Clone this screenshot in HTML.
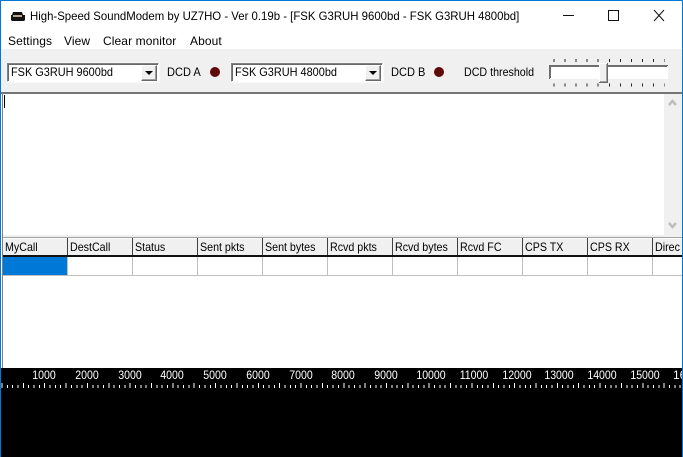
<!DOCTYPE html>
<html><head><meta charset="utf-8"><style>
html,body{margin:0;padding:0;background:#fff}
body{width:683px;height:457px;position:relative;overflow:hidden;font-family:"Liberation Sans",sans-serif;font-size:12px;color:#000}
.a{position:absolute;white-space:nowrap;line-height:13px;transform-origin:0 50%}
.b{position:absolute}
.m{font-size:12px;line-height:15px;top:34px;letter-spacing:.1px}
.combo{position:absolute;top:63px;height:17px;width:150px;background:#fff;border:1px solid;border-color:#808080 #fff #fff #808080;box-shadow:inset 1px 1px 0 #696969,0 0 0 1px #f8f8f8}
.combo span{position:absolute;left:3px;top:2px;line-height:13px;transform:scaleX(.91);transform-origin:0 50%;white-space:nowrap}
.btn{position:absolute;right:1px;top:1px;width:16px;height:16px;box-sizing:border-box;background:#f0f0f0;border:1px solid;border-color:#fff #696969 #696969 #fff;box-shadow:inset -1px -1px 0 #a0a0a0}
.btn i{position:absolute;left:3px;top:5px;width:0;height:0;border:4px solid transparent;border-top:4px solid #000;border-bottom:0}
.led{position:absolute;width:10px;height:10px;border-radius:50%;background:#5f0a0a;top:67px}
.h{position:absolute;top:238px;height:18px;box-sizing:border-box;width:65px;background:#f0f0f0;border-right:1px solid #404040;box-shadow:inset 0 1px 0 #fff}
.h span{position:absolute;left:2px;top:3px;line-height:13px;transform:scaleX(.89);transform-origin:0 50%;white-space:nowrap}
.c{position:absolute;top:257px;height:19px;width:65px;box-sizing:border-box;border-right:1px solid #bfbfbf;border-bottom:1px solid #bfbfbf}
.t{position:absolute;top:368px;color:#fff;font-size:12px;line-height:14px;transform:translateX(-50%) scaleX(.88)}
</style></head><body>
<div class="b" style="left:0;top:0;width:683px;height:1px;background:#0078d7"></div>
<svg class="b" style="left:10px;top:12px" width="16" height="10" viewBox="0 0 16 10"><path d="M3 0H12L13 3H15V8L14 9H2L1 8V3H2Z" fill="#111"/><rect x="3" y="3" width="9" height="2" fill="#b9a98f"/></svg>
<div class="a" id="title" style="left:30px;top:9px;font-size:12px;line-height:15px;transform:scaleX(.949)">High-Speed SoundModem by UZ7HO - Ver 0.19b - [FSK G3RUH 9600bd - FSK G3RUH 4800bd]</div>
<svg class="b" style="left:560px;top:8px" width="112" height="14" viewBox="0 0 112 14" fill="none" stroke="#111" stroke-width="1" shape-rendering="crispEdges"><path d="M3 7.500H14"/><rect x="48.500" y="2.500" width="10" height="10"/><path shape-rendering="auto" d="M94 2L104 13M104 2L94 13"/></svg>
<div class="a m" style="left:8px">Settings</div>
<div class="a m" style="left:64px">View</div>
<div class="a m" style="left:103px">Clear monitor</div>
<div class="a m" style="left:190px">About</div>

<div class="b" style="left:1px;top:49px;width:681px;height:43px;background:#f0f0f0"></div>
<div class="combo" style="left:7px"><span>FSK G3RUH 9600bd</span><div class="btn"><i></i></div></div>
<div class="a" style="left:167px;top:66px;transform:scaleX(.92)">DCD A</div>
<div class="led" style="left:210px"></div>
<div class="combo" style="left:231px"><span>FSK G3RUH 4800bd</span><div class="btn"><i></i></div></div>
<div class="a" style="left:391px;top:66px;transform:scaleX(.92)">DCD B</div>
<div class="led" style="left:434px"></div>
<div class="a" style="left:464px;top:66px;transform:scaleX(.89)">DCD threshold</div>
<svg class="b" style="left:549px;top:57px" width="120" height="32" viewBox="0 0 120 32" shape-rendering="crispEdges">
<rect x="0" y="8" width="119" height="14" fill="#fff"/>
<path d="M0 8.500H119M0 9.500H118M.5 8V22M1.500 8V21" fill="none" stroke="#6e6e6e"/>
<path d="M4.300 3.500H116M4.300 28H116" fill="none" stroke="#222" stroke-width="3" stroke-dasharray="1 10.100"/>
<rect x="50" y="6" width="9" height="20" fill="#f0f0f0"/>
<path d="M50 6.500H58M50.500 6V26" fill="none" stroke="#fff"/><path d="M58.500 6V26M50 25.500H59" fill="none" stroke="#696969"/><path d="M57.500 7V25M51 24.500H58" fill="none" stroke="#a0a0a0"/>
</svg>

<div class="b" style="left:1px;top:92px;width:681px;height:2px;background:#747474"></div>
<div class="b" style="left:4px;top:95px;width:1px;height:13px;background:#000"></div>
<div class="b" style="left:664px;top:94px;width:18px;height:141px;background:#f0f0f0"></div>
<svg class="b" style="left:664px;top:94px" width="18" height="141" fill="none" stroke="#bdbdbd" stroke-width="2.500"><path d="M5 11L8.500 7L12 11M5 129L8.500 133L12 129"/></svg>
<div class="b" style="left:1px;top:235px;width:681px;height:2px;background:#f0f0f0"></div>

<div class="b" style="left:2px;top:237px;width:680px;height:1px;background:#a0a0a0"></div>
<div class="b" style="left:2px;top:92px;width:1px;height:276px;background:#808080"></div>
<div class="h" style="left:3px"><span>MyCall</span></div>
<div class="h" style="left:68px"><span>DestCall</span></div>
<div class="h" style="left:133px"><span>Status</span></div>
<div class="h" style="left:198px"><span>Sent pkts</span></div>
<div class="h" style="left:263px"><span>Sent bytes</span></div>
<div class="h" style="left:328px"><span>Rcvd pkts</span></div>
<div class="h" style="left:393px"><span>Rcvd bytes</span></div>
<div class="h" style="left:458px"><span>Rcvd FC</span></div>
<div class="h" style="left:523px"><span>CPS TX</span></div>
<div class="h" style="left:588px"><span>CPS RX</span></div>
<div class="h" style="left:653px;width:29px;border-right:0;overflow:hidden"><span>Direc</span></div>
<div class="b" style="left:3px;top:255px;width:679px;height:2px;background:#111"></div>
<div class="c" style="left:3px;background:#0078d7"></div>
<div class="c" style="left:68px"></div><div class="c" style="left:133px"></div><div class="c" style="left:198px"></div><div class="c" style="left:263px"></div><div class="c" style="left:328px"></div><div class="c" style="left:393px"></div><div class="c" style="left:458px"></div><div class="c" style="left:523px"></div><div class="c" style="left:588px"></div><div class="c" style="left:653px;width:29px;border-right:0"></div>

<div class="b" style="left:0;top:368px;width:682px;height:89px;background:#000"></div>
<div class="b" style="left:0;top:0;width:1px;height:457px;background:#0078d7"></div>
<div class="b" style="left:682px;top:0;width:1px;height:457px;background:#0078d7"></div>
<div class="t" style="left:44px">1000</div><div class="t" style="left:87px">2000</div><div class="t" style="left:130px">3000</div><div class="t" style="left:172px">4000</div><div class="t" style="left:215px">5000</div><div class="t" style="left:258px">6000</div><div class="t" style="left:301px">7000</div><div class="t" style="left:343px">8000</div><div class="t" style="left:386px">9000</div><div class="t" style="left:431px">10000</div><div class="t" style="left:474px">11000</div><div class="t" style="left:517px">12000</div><div class="t" style="left:559px">13000</div><div class="t" style="left:602px">14000</div><div class="t" style="left:645px">15000</div>
<div class="a" style="left:673px;top:368px;color:#fff;font-size:12px;line-height:14px;width:9px;overflow:hidden">16000</div>
<svg class="b" style="left:0;top:380px" width="682" height="12" shape-rendering="crispEdges"><path d="M1.500 6.500H682" stroke="#fff" stroke-width="3" stroke-dasharray="1 4.340"/><path d="M1.500 5.500H682" stroke="#fff" stroke-width="5" stroke-dasharray="1 20.360"/></svg>
</body></html>
